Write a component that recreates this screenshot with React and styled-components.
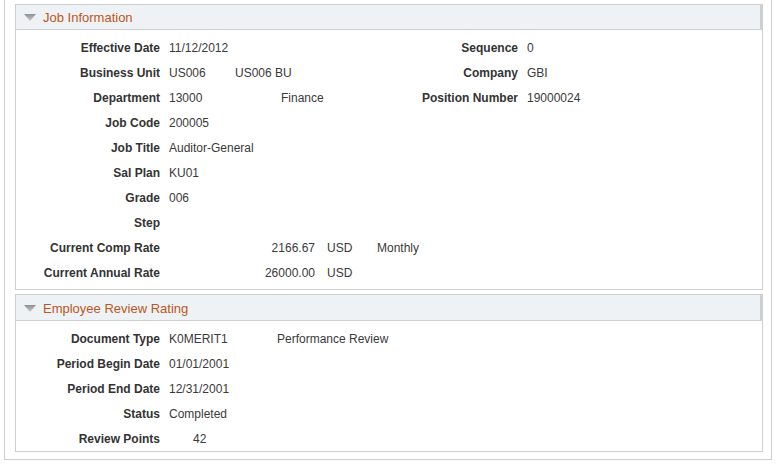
import React from "react";
import styled, { createGlobalStyle } from "styled-components";

const Global = createGlobalStyle`
  html, body { margin: 0; padding: 0; background: #fff; }
  body { font-family: "Liberation Sans", Arial, sans-serif; }
`;

const Outer = styled.div`
  box-sizing: border-box;
  margin-left: 4px;
  width: 768px;
  border: 1px solid #cdd0d2;
  border-top: none;
  padding: 4px 8px 7px 10px;
  display: flex;
  flex-direction: column;
  gap: 4px;
`;

const Section = styled.section`
  box-sizing: border-box;
  width: 748px;
  border: 1px solid #cdd0d2;
`;

const Header = styled.div`
  box-sizing: border-box;
  height: ${(p) => p.$h}px;
  display: flex;
  align-items: center;
  background: #eff2f4;
  border-bottom: 1px solid #cdd0d2;
  box-shadow: inset -2px 0 0 #cdd0d2;
  padding: 1px 0 0 8px;
  gap: 7px;
`;

const Title = styled.span`
  font-size: 13px;
  color: #b9571d;
  line-height: 16px;
  padding-top: 1px;
`;

const Body = styled.div`
  padding: ${(p) => p.$pt}px 0 ${(p) => p.$pb}px 0;
`;

const Row = styled.div`
  display: flex;
  height: 25px;
  align-items: center;
  font-size: 12px;
  color: #333;
`;

const Group = styled.div`
  display: flex;
  align-items: center;
  width: ${(p) => (p.$w ? `${p.$w}px` : "auto")};
  flex: none;
`;

const Label = styled.div`
  width: ${(p) => p.$w}px;
  text-align: right;
  font-weight: bold;
  color: #333;
  margin-right: 9px;
  white-space: nowrap;
  flex: none;
`;

const Field = styled.div`
  width: ${(p) => (p.$w ? `${p.$w}px` : "auto")};
  text-align: ${(p) => p.$align || "left"};
  padding-left: ${(p) => p.$pl || 0}px;
  margin-right: ${(p) => p.$mr || 0}px;
  color: #3a3a3a;
  white-space: nowrap;
  flex: none;
`;

const Arrow = () => (
  <svg width="12" height="7" viewBox="0 0 12 7">
    <defs>
      <linearGradient id="tri" x1="0" y1="0" x2="0" y2="1">
        <stop offset="0" stopColor="#8e9194" />
        <stop offset="1" stopColor="#c9cbcd" />
      </linearGradient>
    </defs>
    <polygon points="0,0 12,0 6,7" fill="url(#tri)" />
  </svg>
);

const Pair = ({ label, lw = 144, children }) => (
  <>
    <Label $w={lw}>{label}</Label>
    {children}
  </>
);

export default function App() {
  return (
    <>
      <Global />
      <Outer>
        <Section>
          <Header $h={25}>
            <Arrow />
            <Title>Job Information</Title>
          </Header>
          <Body $pt={5} $pb={4}>
            <Row>
              <Group $w={400}>
                <Pair label="Effective Date"><Field>11/12/2012</Field></Pair>
              </Group>
              <Pair label="Sequence" lw={102}><Field>0</Field></Pair>
            </Row>
            <Row>
              <Group $w={400}>
                <Pair label="Business Unit">
                  <Field $w={66}>US006</Field>
                  <Field>US006 BU</Field>
                </Pair>
              </Group>
              <Pair label="Company" lw={102}><Field>GBI</Field></Pair>
            </Row>
            <Row>
              <Group $w={400}>
                <Pair label="Department">
                  <Field $w={112}>13000</Field>
                  <Field>Finance</Field>
                </Pair>
              </Group>
              <Pair label="Position Number" lw={102}><Field>19000024</Field></Pair>
            </Row>
            <Row>
              <Pair label="Job Code"><Field>200005</Field></Pair>
            </Row>
            <Row>
              <Pair label="Job Title"><Field>Auditor-General</Field></Pair>
            </Row>
            <Row>
              <Pair label="Sal Plan"><Field>KU01</Field></Pair>
            </Row>
            <Row>
              <Pair label="Grade"><Field>006</Field></Pair>
            </Row>
            <Row>
              <Pair label="Step"><Field></Field></Pair>
            </Row>
            <Row>
              <Pair label="Current Comp Rate">
                <Field $w={146} $align="right" $mr={12}>2166.67</Field>
                <Field $w={50}>USD</Field>
                <Field>Monthly</Field>
              </Pair>
            </Row>
            <Row>
              <Pair label="Current Annual Rate">
                <Field $w={146} $align="right" $mr={12}>26000.00</Field>
                <Field $w={50}>USD</Field>
              </Pair>
            </Row>
          </Body>
        </Section>
        <Section>
          <Header $h={26}>
            <Arrow />
            <Title>Employee Review Rating</Title>
          </Header>
          <Body $pt={5} $pb={0}>
            <Row>
              <Pair label="Document Type">
                <Field $w={108}>K0MERIT1</Field>
                <Field>Performance Review</Field>
              </Pair>
            </Row>
            <Row>
              <Pair label="Period Begin Date"><Field>01/01/2001</Field></Pair>
            </Row>
            <Row>
              <Pair label="Period End Date"><Field>12/31/2001</Field></Pair>
            </Row>
            <Row>
              <Pair label="Status"><Field>Completed</Field></Pair>
            </Row>
            <Row>
              <Pair label="Review Points"><Field $pl={24}>42</Field></Pair>
            </Row>
          </Body>
        </Section>
      </Outer>
    </>
  );
}
